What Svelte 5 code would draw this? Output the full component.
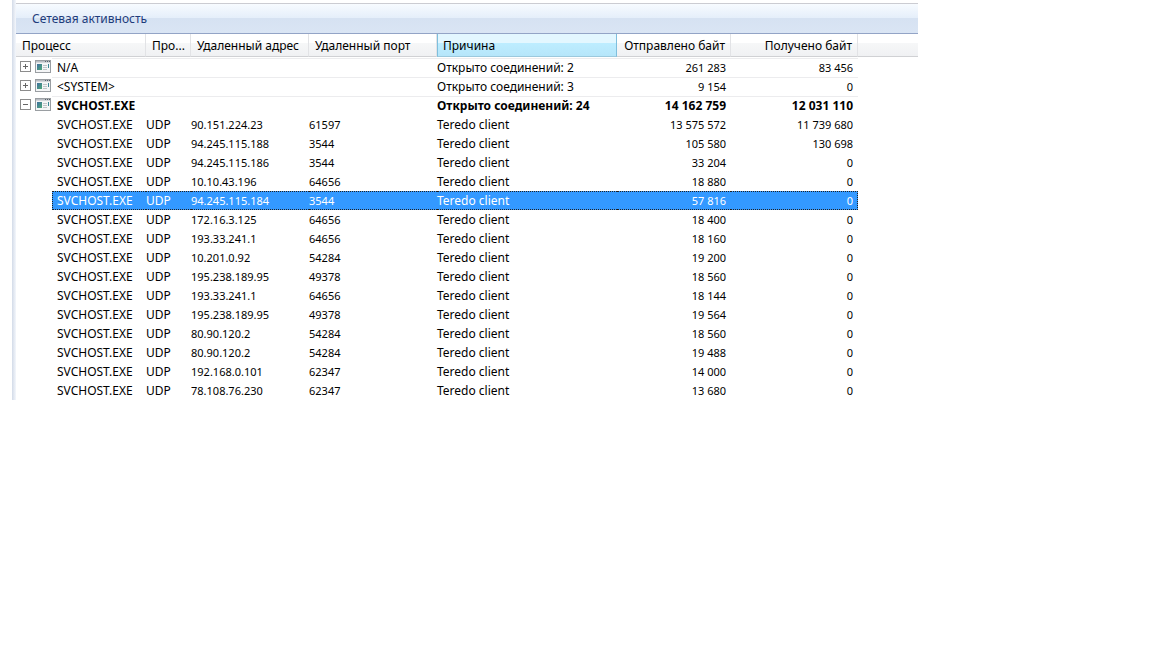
<script lang="ts">
	interface Connection {
		id: number;
		protocol: string;
		address: string;
		port: string;
		reason: string;
		sent: number;
		received: number;
	}

	interface ProcessGroup {
		name: string;
		count: number;
		sent: number;
		received: number;
		expanded: boolean;
		connections: Connection[];
	}

	const teredo: [string, string, number, number][] = [
		['90.151.224.23', '61597', 13575572, 11739680],
		['94.245.115.188', '3544', 105580, 130698],
		['94.245.115.186', '3544', 33204, 0],
		['10.10.43.196', '64656', 18880, 0],
		['94.245.115.184', '3544', 57816, 0],
		['172.16.3.125', '64656', 18400, 0],
		['193.33.241.1', '64656', 18160, 0],
		['10.201.0.92', '54284', 19200, 0],
		['195.238.189.95', '49378', 18560, 0],
		['193.33.241.1', '64656', 18144, 0],
		['195.238.189.95', '49378', 19564, 0],
		['80.90.120.2', '54284', 18560, 0],
		['80.90.120.2', '54284', 19488, 0],
		['192.168.0.101', '62347', 14000, 0],
		['78.108.76.230', '62347', 13680, 0]
	];

	let groups: ProcessGroup[] = $state([
		{ name: 'N/A', count: 2, sent: 261283, received: 83456, expanded: false, connections: [] },
		{ name: '<SYSTEM>', count: 3, sent: 9154, received: 0, expanded: false, connections: [] },
		{
			name: 'SVCHOST.EXE',
			count: 24,
			sent: 14162759,
			received: 12031110,
			expanded: true,
			connections: teredo.map(([address, port, sent, received], id) => ({
				id,
				protocol: 'UDP',
				address,
				port,
				reason: 'Teredo client',
				sent,
				received
			}))
		}
	]);

	let selectedId = $state(4);

	// Groups of three digits, kept on one line
	function formatBytes(value: number): string {
		return String(value).replace(/\B(?=(\d{3})+$)/g, '\u00a0');
	}
</script>

<main class="panel">
	<h1>Сетевая активность</h1>

	<table>
		<colgroup>
			<col class="c-toggle" />
			<col class="c-process" />
			<col class="c-protocol" />
			<col class="c-address" />
			<col class="c-port" />
			<col class="c-reason" />
			<col class="c-sent" />
			<col class="c-received" />
			<col />
		</colgroup>
		<thead>
			<tr>
				<th colspan="2">Процесс</th>
				<th>Про...</th>
				<th>Удаленный адрес</th>
				<th>Удаленный порт</th>
				<th class="sorted">Причина</th>
				<th class="num">Отправлено байт</th>
				<th class="num">Получено байт</th>
				<td class="filler"></td>
			</tr>
		</thead>
		<tbody>
			{#each groups as group (group.name)}
				<tr class="group" class:open={group.expanded}>
					<td>
						<div class="tools">
							<button
								type="button"
								aria-label={group.name}
								aria-expanded={group.expanded}
								onclick={() => (group.expanded = !group.expanded)}
							>
								<svg width="11" height="11" viewBox="0 0 11 11" shape-rendering="crispEdges">
									<rect x="0.5" y="0.5" width="10" height="10" fill="#fff" stroke="#8c8c8c" />
									<path d="M3 5.5h5" stroke="#666" />
									{#if !group.expanded}
										<path d="M5.5 3v5" stroke="#666" />
									{/if}
								</svg>
							</button>
							<svg width="16" height="13" viewBox="0 0 16 13" aria-hidden="true">
								<defs>
									<linearGradient id="screen" x1="0" y1="0" x2="1" y2="1">
										<stop offset="0" stop-color="#3f6fa0" />
										<stop offset="1" stop-color="#4fa878" />
									</linearGradient>
								</defs>
								<rect x="0.5" y="0.5" width="15" height="12" fill="#f4f5f6" stroke="#9a9ea2" />
								<path d="M1 1.5h14" stroke="#b9bdc3" />
								<path d="M1 2.5h14" stroke="#d3d6da" />
								<path d="M10 1.5h1M12 1.5h1M14 1.5h1" stroke="#59626b" />
								<rect x="2" y="4" width="5" height="6" fill="url(#screen)" />
								<path d="M8 5.5h4M8 7.5h4M8 9.5h4" stroke="#c0c4c8" />
								<path d="M13.5 4v4" stroke="#3d8796" />
							</svg>
						</div>
					</td>
					<td class="name">{group.name}</td>
					<td></td>
					<td></td>
					<td></td>
					<td>Открыто соединений: {group.count}</td>
					<td class="num">{formatBytes(group.sent)}</td>
					<td class="num">{formatBytes(group.received)}</td>
					<td></td>
				</tr>
				{#if group.expanded}
					{#each group.connections as item (item.id)}
						<tr class:selected={item.id === selectedId} onclick={() => (selectedId = item.id)}>
							<td></td>
							<td class="name">{group.name}</td>
							<td>{item.protocol}</td>
							<td class="net">{item.address}</td>
							<td class="net">{item.port}</td>
							<td>{item.reason}</td>
							<td class="num">{formatBytes(item.sent)}</td>
							<td class="num">{formatBytes(item.received)}</td>
							<td></td>
						</tr>
					{/each}
				{/if}
			{/each}
		</tbody>
	</table>
</main>

<style>
	:global(body) {
		background: #fff;
	}

	.panel {
		margin: 0 234px 0 12px;
		padding-top: 3px;
		background: linear-gradient(90deg, #d3dbe8, #f4f7fc) left / 4px 100% no-repeat;
		padding-left: 4px;
		font-family: 'Segoe UI', 'Noto Sans', sans-serif;
		font-size: 12px;
		color: #000;
	}

	h1 {
		box-sizing: border-box;
		height: 31px;
		margin: 0;
		padding-left: 16px;
		border-top: 1px solid #cbccd2;
		border-bottom: 1px solid #93a4c6;
		background: linear-gradient(#f7fbff, #e4eefa 50%, #d6e2f2 50%, #dae5f4);
		font-size: 12px;
		font-weight: normal;
		line-height: 29px;
		color: #1e3c7b;
	}

	table {
		width: 100%;
		table-layout: fixed;
		border-collapse: separate;
		border-spacing: 0;
	}

	.c-toggle {
		width: 36px;
	}

	.c-process {
		width: 94px;
	}

	.c-protocol {
		width: 45px;
	}

	.c-address {
		width: 118px;
	}

	.c-port {
		width: 128px;
	}

	.c-reason {
		width: 180px;
	}

	.c-sent {
		width: 114px;
	}

	.c-received {
		width: 127px;
	}

	th,
	.filler {
		box-sizing: border-box;
		height: 23px;
		padding: 2px 0 0 6px;
		border-right: 1px solid #e2e3e6;
		border-bottom: 1px solid #d0d1d4;
		background: linear-gradient(#fff 40%, #f6f7f8 40%, #f0f1f3);
		font-weight: normal;
		line-height: 20px;
		text-align: left;
		white-space: nowrap;
	}

	.filler {
		border-right: none;
	}

	th.sorted {
		padding-left: 5px;
		border-right-color: #7fbfdd;
		border-left: 1px solid #7fbfdd;
		border-bottom-color: #9cc9dd;
		background: linear-gradient(#e3f7ff 40%, #bdedff 40%, #b6e6fa);
	}

	th.num,
	td.num {
		padding-right: 5px;
		text-align: right;
	}

	tbody::before {
		content: '';
		display: block;
		height: 1px;
	}

	tbody td {
		box-sizing: border-box;
		height: 19px;
		padding: 0;
		border: 0 solid transparent;
		border-width: 1px 0;
		line-height: 17px;
		white-space: nowrap;
		cursor: default;
	}

	tbody td.name {
		padding-left: 5px;
	}

	td.net,
	tr:not(.open) td.num {
		font-size: 11px;
	}

	.group td:not(:first-child, :last-child) {
		border-top-color: #ececee;
	}

	.group.open {
		font-weight: bold;
	}

	.tools {
		display: flex;
		align-items: flex-start;
		gap: 4px;
		height: 15px;
		padding-left: 4px;
	}

	.tools button {
		display: flex;
		padding: 1px 0 0;
		border: none;
		background: none;
	}

	.selected td:not(:first-child, :last-child) {
		border-color: #222;
		border-style: dotted;
		background: #3399ff;
		color: #fff;
	}

	.selected td.name {
		border-left-width: 1px;
		padding-left: 4px;
	}

	.selected td:nth-last-child(2) {
		border-right-width: 1px;
		padding-right: 4px;
	}
</style>
